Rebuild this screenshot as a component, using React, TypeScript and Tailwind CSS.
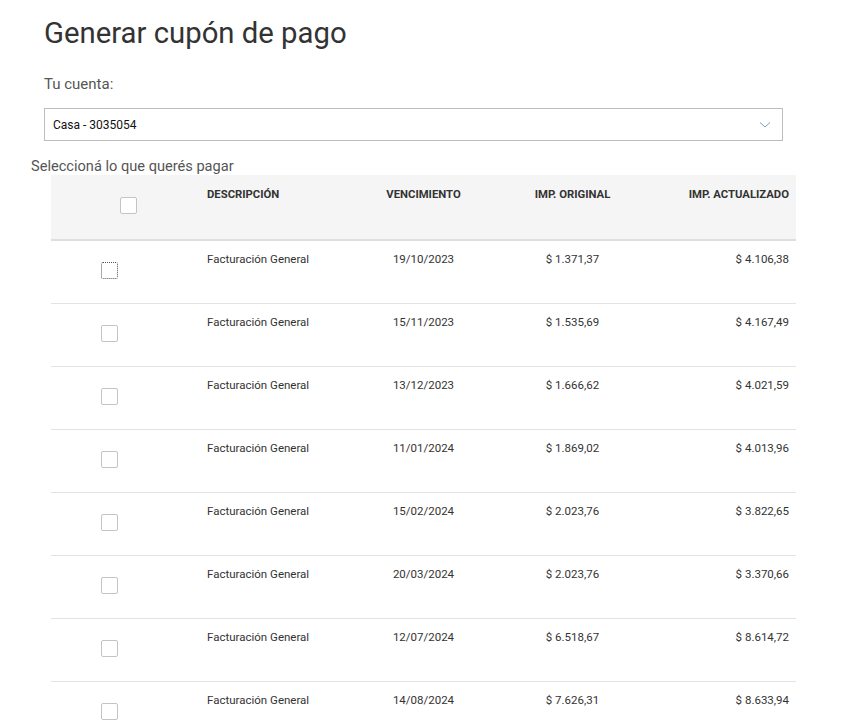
const rows = [
  { fecha: '19/10/2023', original: '$ 1.371,37', actualizado: '$ 4.106,38' },
  { fecha: '15/11/2023', original: '$ 1.535,69', actualizado: '$ 4.167,49' },
  { fecha: '13/12/2023', original: '$ 1.666,62', actualizado: '$ 4.021,59' },
  { fecha: '11/01/2024', original: '$ 1.869,02', actualizado: '$ 4.013,96' },
  { fecha: '15/02/2024', original: '$ 2.023,76', actualizado: '$ 3.822,65' },
  { fecha: '20/03/2024', original: '$ 2.023,76', actualizado: '$ 3.370,66' },
  { fecha: '12/07/2024', original: '$ 6.518,67', actualizado: '$ 8.614,72' },
  { fecha: '14/08/2024', original: '$ 7.626,31', actualizado: '$ 8.633,94' },
]

export default function App() {
  return (
    <div className="min-h-screen bg-white font-['Roboto',sans-serif] text-[#333]">
      <div className="pt-[16px]">
        {/* Title */}
        <h1 className="pl-[44px] text-[29.3px] leading-[34px] font-normal text-[#333]">
          Generar cupón de pago
        </h1>

        {/* Account select */}
        <p className="pl-[44px] mt-[24px] text-[15px] leading-[20px] text-[#555]">Tu cuenta:</p>
        <div className="ml-[44px] mt-[14px] w-[739px] h-[33px] border border-[#bdbdbd] flex items-center justify-between pl-[8px] pr-[11px]">
          <span className="text-[12px] text-[#111]">Casa - 3035054</span>
          <svg width="12" height="8" viewBox="0 0 12 8" fill="none">
            <polyline points="1,1.5 6,6 11,1.5" stroke="#7d9cc0" strokeWidth="1" />
          </svg>
        </div>

        <p className="pl-[31px] mt-[16px] text-[14.6px] leading-[18px] text-[#555]">
          Seleccioná lo que querés pagar
        </p>

        {/* Table */}
        <div className="ml-[51px] w-[745px]">
          <div className="grid grid-cols-5 h-[66px] bg-[#f5f5f5] border-b-2 border-[#dedede] text-[11.3px] leading-[14px] font-bold text-[#333]">
            <div className="pt-[22px] pl-[69px]">
              <div className="w-[17px] h-[17px] bg-white border border-[#c4c4c4] rounded-[2px]" />
            </div>
            <div className="pt-[13px] pl-[7px]">DESCRIPCIÓN</div>
            <div className="pt-[13px] text-center">VENCIMIENTO</div>
            <div className="pt-[13px] text-center">IMP. ORIGINAL</div>
            <div className="pt-[13px] pr-[7px] text-right">IMP. ACTUALIZADO</div>
          </div>

          {rows.map((row, i) => (
            <div
              key={i}
              className="grid grid-cols-5 h-[63px] border-b border-[#e3e3e3] text-[11.5px] leading-[14px] text-[#333]"
            >
              <div className="pt-[21px] pl-[50px]">
                <div
                  className={`w-[17px] h-[17px] border rounded-[2px] bg-white ${
                    i === 0 ? 'border-[#555] border-dotted' : 'border-[#c4c4c4]'
                  }`}
                />
              </div>
              <div className="pt-[11px] pl-[7px]">Facturación General</div>
              <div className="pt-[11px] text-center">{row.fecha}</div>
              <div className="pt-[11px] text-center">{row.original}</div>
              <div className="pt-[11px] pr-[7px] text-right">{row.actualizado}</div>
            </div>
          ))}
        </div>
      </div>
    </div>
  )
}
